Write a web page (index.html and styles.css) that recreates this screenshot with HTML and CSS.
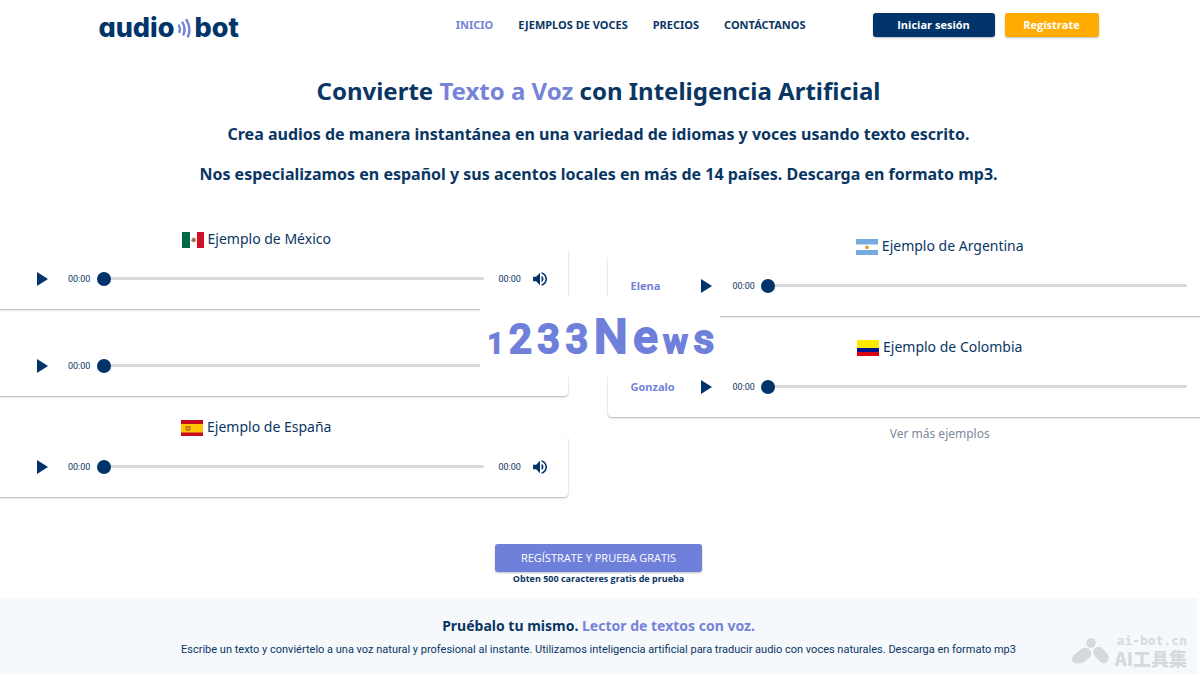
FILE: index.html
```html
<!DOCTYPE html>
<html lang="es">
<head>
    <meta charset="UTF-8">
    <meta name="viewport" content="width=device-width, initial-scale=1.0">
    <title>Audiobot</title>
    <link rel="stylesheet" href="styles.css">
</head>
<body>
    <!-- iconos compartidos -->
    <svg width="0" height="0" class="sprite" aria-hidden="true">
        <symbol id="play" viewBox="0 0 11 14"><path d="M0 0L11 7L0 14Z" fill="#00346a"/></symbol>
        <symbol id="volume" viewBox="3 3 18 18"><path fill="#00346a" d="M3 9v6h4l5 5V4L7 9H3zm13.5 3c0-1.77-1.02-3.29-2.5-4.03v8.05c1.48-.73 2.5-2.25 2.5-4.02zM14 3.23v2.06c2.89.86 5 3.54 5 6.71s-2.11 5.85-5 6.71v2.06c4.01-.91 7-4.49 7-8.77s-2.99-7.86-7-8.77z"/></symbol>
    </svg>

    <header class="header">
        <a href="#" class="logo">
            <span>audio</span>
            <svg class="logo-waves" viewBox="0 0 14 20" fill="none" stroke="#7583d8" stroke-width="2.4" stroke-linecap="round">
                <path d="M2 7.5Q3.6 10.5 2.4 14"/>
                <path d="M5.5 4.5Q9 10.5 6.5 16.5"/>
                <path d="M9.5 2Q14.5 10 11 18.500"/>
            </svg>
            <span>bot</span>
        </a>
        <nav class="nav">
            <a href="#" class="active">INICIO</a>
            <a href="#ejemplos">EJEMPLOS DE VOCES</a>
            <a href="#">PRECIOS</a>
            <a href="#">CONTÁCTANOS</a>
        </nav>
        <div class="header-buttons">
            <button class="btn btn-login">Iniciar sesión</button>
            <button class="btn btn-register">Regístrate</button>
        </div>
    </header>

    <main>
        <section class="hero">
            <h1>Convierte <span class="accent">Texto a Voz</span> con Inteligencia Artificial</h1>
            <p>Crea audios de manera instantánea en una variedad de idiomas y voces usando texto escrito.</p>
            <p>Nos especializamos en español y sus acentos locales en más de 14 países. Descarga en formato mp3.</p>
        </section>

        <section class="examples" id="ejemplos">
            <div class="examples-grid">
                <div class="column">
                    <h2 class="country">
                        <svg class="flag" viewBox="0 0 22 16"><rect width="22" height="16" fill="#fff"/><rect width="8" height="16" fill="#006847"/><rect x="15" width="7" height="16" fill="#ce1126"/><path d="M9 8.500l2-3 2.500 1 .5 2.500-2.500 1.500z" fill="#a0705c"/></svg>
                        Ejemplo de México
                    </h2>
                    <div class="player">
                        <span class="voice"></span>
                        <button class="icon-btn play" aria-label="Reproducir"><svg><use href="#play"/></svg></button>
                        <span class="time">00:00</span>
                        <input type="range" class="seek" value="0" aria-label="Posición">
                        <span class="time">00:00</span>
                        <button class="icon-btn volume" aria-label="Volumen"><svg><use href="#volume"/></svg></button>
                    </div>
                    <div class="player player-next">
                        <span class="voice"></span>
                        <button class="icon-btn play" aria-label="Reproducir"><svg><use href="#play"/></svg></button>
                        <span class="time">00:00</span>
                        <input type="range" class="seek" value="0" aria-label="Posición">
                        <span class="time-space"></span>
                    </div>
                    <h2 class="country">
                        <svg class="flag" viewBox="0 0 22 16"><rect width="22" height="16" fill="#c60b1e"/><rect y="4" width="22" height="8.500" fill="#ffc400"/><path d="M4.500 6h5v4l-2.500 1.200-2.500-1.200z" fill="#b9701f"/><path d="M6 7.500h2v2h-2z" fill="#d9a03a"/></svg>
                        Ejemplo de España
                    </h2>
                    <div class="player">
                        <span class="voice"></span>
                        <button class="icon-btn play" aria-label="Reproducir"><svg><use href="#play"/></svg></button>
                        <span class="time">00:00</span>
                        <input type="range" class="seek" value="0" aria-label="Posición">
                        <span class="time">00:00</span>
                        <button class="icon-btn volume" aria-label="Volumen"><svg><use href="#volume"/></svg></button>
                    </div>
                </div>

                <div class="column column-right">
                    <h2 class="country">
                        <svg class="flag" viewBox="0 0 22 16"><rect width="22" height="16" fill="#74acdf"/><rect y="5.500" width="22" height="5.500" fill="#fff"/><circle cx="11" cy="8.300" r="1.900" fill="#e0a040"/></svg>
                        Ejemplo de Argentina
                    </h2>
                    <div class="player">
                        <span class="voice">Elena</span>
                        <button class="icon-btn play" aria-label="Reproducir"><svg><use href="#play"/></svg></button>
                        <span class="time">00:00</span>
                        <input type="range" class="seek" value="0" aria-label="Posición">
                        <span class="time-space"></span>
                    </div>
                    <h2 class="country">
                        <svg class="flag" viewBox="0 0 22 16"><rect width="22" height="16" fill="#ffe800"/><rect y="8" width="22" height="8" fill="#00148e"/><rect y="12" width="22" height="4" fill="#da0010"/></svg>
                        Ejemplo de Colombia
                    </h2>
                    <div class="player">
                        <span class="voice">Gonzalo</span>
                        <button class="icon-btn play" aria-label="Reproducir"><svg><use href="#play"/></svg></button>
                        <span class="time">00:00</span>
                        <input type="range" class="seek" value="0" aria-label="Posición">
                        <span class="time-space"></span>
                    </div>
                    <a href="#" class="more">Ver más ejemplos</a>
                </div>
            </div>

            <div class="stamp">
                <span class="xs">1</span><span class="md">2</span><span class="md">3</span><span class="md">3</span><span class="xl">N</span><span class="lg">e</span><span class="sm">w</span><span class="md">s</span>
            </div>
        </section>

        <section class="cta">
            <button class="btn btn-cta">REGÍSTRATE Y PRUEBA GRATIS</button>
            <p>Obten 500 caracteres gratis de prueba</p>
        </section>

        <section class="try">
            <h2>Pruébalo tu mismo. <span class="accent">Lector de textos con voz.</span></h2>
            <p>Escribe un texto y conviértelo a una voz natural y profesional al instante. Utilizamos inteligencia artificial para traducir audio con voces naturales. Descarga en formato mp3</p>
            <div class="watermark">
                <svg viewBox="0 0 37 26" fill="#d6d9db">
                    <circle cx="19" cy="5" r="4.800"/>
                    <path d="M2 17L9 11Q14 7.500 18 12Q21 16 17 20L12 24Q8 26 4 25.500Q-3 23 2 17Z"/>
                    <path d="M23 10Q27 7 31 11L35.500 16Q38.500 20 35 24Q31 27 27 23L22 17Q20 13 23 10Z"/>
                </svg>
                <div class="watermark-text">
                    <span class="domain">ai-bot.cn</span>
                    <span class="name">AI工具集</span>
                </div>
            </div>
        </section>
    </main>
</body>
</html>
```
FILE: styles.css
```css
* {
    box-sizing: border-box;
}
body {
    margin: 0;
    padding-right: 3px;
    font-family: "Noto Sans", "Open Sans", sans-serif;
    color: #0a3664;
    background-color: #fff;
}
h1, h2, p {
    margin: 0;
}
a {
    color: inherit;
    text-decoration: none;
}
.sprite {
    position: absolute;
}
.accent {
    color: #7583d8;
}

/* cabecera */
.header {
    display: flex;
    align-items: center;
    max-width: 1000px;
    height: 50px;
    margin: 0 auto;
}
.logo {
    display: flex;
    align-items: center;
    gap: 3px;
    padding-top: 5px;
    font-family: Inter, sans-serif;
    font-feature-settings: "cv11";
    font-size: 27px;
    font-weight: 800;
    line-height: 32px;
    color: #00346a;
}
.logo-waves {
    width: 14px;
    height: 20px;
}
.nav {
    display: flex;
    gap: 25px;
    margin-left: auto;
    font-size: 11px;
    line-height: 14px;
    font-weight: 700;
}
.nav .active {
    color: #7583d8;
}
.header-buttons {
    display: flex;
    gap: 10px;
    margin-left: 67px;
}
.btn {
    padding: 0;
    border: none;
    border-radius: 3px;
    font-family: "Open Sans", sans-serif;
    font-size: 11px;
    line-height: 14px;
    font-weight: 700;
    color: #fff;
    box-shadow: 0 1px 2px rgba(0,0,0,0.25);
    cursor: pointer;
}
.btn-login {
    width: 122px;
    height: 24px;
    background-color: #00346a;
}
.btn-register {
    width: 94px;
    height: 24px;
    background-color: #ffab00;
}

/* portada */
.hero {
    padding-top: 23px;
    text-align: center;
}
.hero h1 {
    font-size: 24px;
    line-height: 36px;
    font-weight: 700;
}
.hero p {
    margin-top: 10px;
    font-size: 16px;
    line-height: 30px;
    font-weight: 700;
}

/* ejemplos de voces, las tarjetas salen por los dos lados */
.examples {
    position: relative;
    margin-right: -3px;
    padding: 19px 3px 4px 0;
    overflow: hidden;
}
.examples-grid {
    display: grid;
    grid-template-columns: 624fr 662fr;
    gap: 40px;
    margin: 0 -74px 0 -56px;
}
.column-right {
    padding-top: 7px;
}
.country {
    display: flex;
    justify-content: center;
    align-items: flex-end;
    gap: 4px;
    height: 40px;
    font-size: 14px;
    line-height: 18px;
    font-weight: 400;
}
.flag {
    width: 22px;
    height: 16px;
}
.player {
    display: flex;
    align-items: center;
    height: 61px;
    padding: 0 21px 0 22px;
    border-radius: 4px;
    box-shadow: 0 1px 2px rgba(0,0,0,0.3);
}
.player-next {
    margin-top: 26px;
}
.voice {
    width: 71px;
    font-size: 11px;
    font-weight: 700;
    color: #7583d8;
}
.icon-btn {
    display: flex;
    padding: 0;
    border: none;
    background: none;
    cursor: pointer;
}
.play svg {
    width: 11px;
    height: 14px;
}
.volume svg {
    width: 14px;
    height: 14px;
}
.time {
    width: 22px;
    margin: 0 7px 0 20px;
    font-family: Roboto, sans-serif;
    font-size: 9px;
    white-space: nowrap;
}
.seek {
    flex: 1;
    min-width: 0;
    height: 14px;
    margin: 0;
    background: none;
    appearance: none;
}
.seek::-webkit-slider-runnable-track {
    height: 3px;
    border-radius: 2px;
    background-color: #d8d8d8;
}
.seek::-webkit-slider-thumb {
    appearance: none;
    width: 14px;
    height: 14px;
    margin-top: -5px;
    border-radius: 50%;
    background-color: #00346a;
}
.seek + .time {
    margin: 0 13px 0 14px;
}
.time-space {
    width: 63px;
}
.more {
    display: block;
    margin-top: 8px;
    font-size: 12px;
    line-height: 18px;
    text-align: center;
    color: #7b8a9c;
}

/* rótulo encima de los reproductores */
.stamp {
    position: absolute;
    top: 108px;
    left: 40%;
    display: flex;
    justify-content: space-between;
    align-items: baseline;
    width: 240px;
    height: 80px;
    padding: 0 6px 0 8px;
    font-family: Roboto, sans-serif;
    font-weight: 500;
    line-height: 80px;
    color: #6f80da;
    background-color: #fff;
    -webkit-text-stroke: 2px #6f80da;
}
.stamp .xs { font-size: 27px; }
.stamp .sm { font-size: 33px; }
.stamp .md { font-size: 40px; }
.stamp .lg { font-size: 46px; }
.stamp .xl { font-size: 48px; }

.cta {
    padding: 43px 0 13px;
    text-align: center;
}
.btn-cta {
    display: block;
    width: 207px;
    height: 28px;
    margin: 0 auto;
    font-weight: 400;
    background-color: #6f80da;
}
.cta p {
    font-family: "Open Sans", sans-serif;
    font-size: 9px;
    line-height: 13px;
    font-weight: 700;
}

.try {
    position: relative;
    height: 76px;
    padding-top: 16px;
    text-align: center;
    background-color: #f5f9fc;
}
.try h2 {
    font-size: 14px;
    line-height: 24px;
    font-weight: 700;
}
.try p {
    margin-top: 4px;
    font-family: Roboto, sans-serif;
    font-size: 11px;
    line-height: 16px;
}
.watermark {
    position: absolute;
    right: 10px;
    bottom: 7px;
    display: flex;
    align-items: center;
    gap: 6px;
    color: #d6d9db;
}
.watermark svg {
    width: 37px;
    height: 26px;
}
.watermark-text {
    display: flex;
    flex-direction: column;
    align-items: flex-end;
    gap: 2px;
    font-weight: 700;
}
.domain {
    font-family: "DejaVu Sans Mono", monospace;
    font-size: 13px;
    line-height: 12px;
}
.name {
    font-family: "Noto Sans CJK SC", sans-serif;
    font-size: 18px;
    font-weight: 900;
    line-height: 18px;
}
```
